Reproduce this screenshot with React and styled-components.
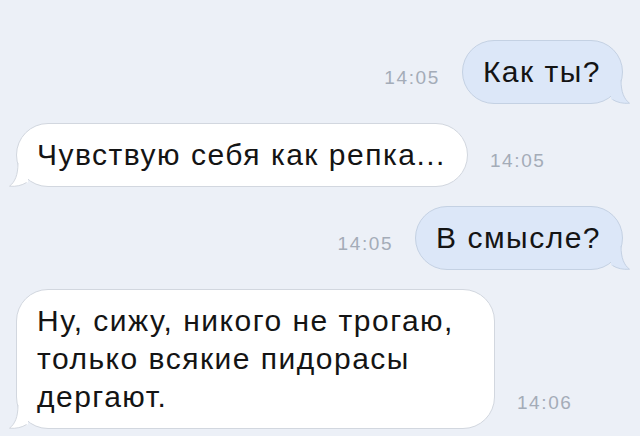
import React from "react";
import styled, { createGlobalStyle } from "styled-components";

const GlobalStyle = createGlobalStyle`
  html, body {
    margin: 0;
    padding: 0;
    background: #ecf0f7;
  }
  body {
    font-family: "Liberation Sans", Arial, sans-serif;
  }
`;

const messages = [
  { out: true, time: "14:05", lines: ["Как ты?"] },
  { out: false, time: "14:05", lines: ["Чувствую себя как репка..."] },
  { out: true, time: "14:05", lines: ["В смысле?"] },
  {
    out: false,
    time: "14:06",
    lines: ["Ну, сижу, никого не трогаю,", "только всякие пидорасы", "дергают."],
    padRight: 40,
  },
];

const Tail = ({ out }) => {
  const fill = out ? "#dce7f8" : "#ffffff";
  const stroke = out ? "#c4d1e3" : "#d2d7df";
  return (
    <TailSvg $out={out} width="20" height="24" viewBox="0 0 20 24">
      <path d="M0 0 L10 0 C10 12 13 19 18.5 23.2 C12 23.8 6 22.4 1.5 19.5 L0 19.5 Z" fill={fill} />
      <path d="M10 0 C10 12 13 19 18.5 23.2 C12 23.8 6 22.4 1.5 19.5" fill="none" stroke={stroke} strokeWidth="1" />
    </TailSvg>
  );
};

const App = () => {
  return (
    <>
      <GlobalStyle />
      <Chat>
        {messages.map((m, i) => (
          <Row key={i} $out={m.out}>
            {m.out && <Time>{m.time}</Time>}
            <Bubble $out={m.out} $padRight={m.padRight}>
              {m.lines.map((l, j) => (
                <Line key={j}>{l}</Line>
              ))}
              <Tail out={m.out} />
            </Bubble>
            {!m.out && <Time>{m.time}</Time>}
          </Row>
        ))}
      </Chat>
    </>
  );
};

const Chat = styled.div`
  width: 640px;
  height: 436px;
  box-sizing: border-box;
  padding: 40px 17px 0 16px;
  display: flex;
  flex-direction: column;
  gap: 19px;
  overflow: hidden;
`;

const Row = styled.div`
  display: flex;
  align-items: flex-end;
  justify-content: ${(p) => (p.$out ? "flex-end" : "flex-start")};
  gap: 22px;
`;

const Time = styled.span`
  font-size: 19px;
  letter-spacing: 1.6px;
  color: #a4acb8;
  padding-bottom: 15px;
`;

const Bubble = styled.div`
  position: relative;
  box-sizing: border-box;
  padding: 12px ${(p) => p.$padRight || 21}px 12px 20px;
  border-radius: 32px;
  background: ${(p) => (p.$out ? "#dce7f8" : "#ffffff")};
  border: 1px solid ${(p) => (p.$out ? "#c4d1e3" : "#d2d7df")};
  color: #141414;
  font-size: 30px;
  letter-spacing: 1.5px;
  line-height: 38px;
`;

const Line = styled.div`
  white-space: nowrap;
`;

const TailSvg = styled.svg`
  position: absolute;
  bottom: -1px;
  ${(p) => (p.$out ? "right: -9px;" : "left: -9px; transform: scaleX(-1);")}
  display: block;
`;

export default App;
